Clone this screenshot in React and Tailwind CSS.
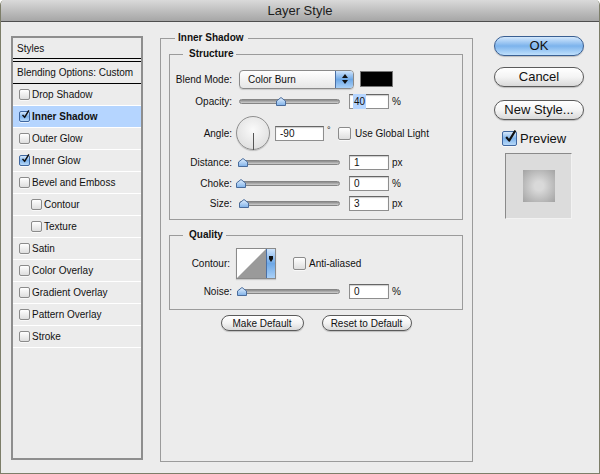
const styles = [
  { name: 'Drop Shadow' },
  { name: 'Inner Shadow', checked: true, selected: true },
  { name: 'Outer Glow' },
  { name: 'Inner Glow', checked: true },
  { name: 'Bevel and Emboss' },
  { name: 'Contour', indent: true },
  { name: 'Texture', indent: true },
  { name: 'Satin' },
  { name: 'Color Overlay' },
  { name: 'Gradient Overlay' },
  { name: 'Pattern Overlay' },
  { name: 'Stroke' },
]

const CheckMark = () => (
  <svg viewBox="0 0 12 12" className="absolute -top-[2px] left-[1px] w-full h-full overflow-visible">
    <path d="M2 6.5 L4.8 9.8 L10.5 0.5" fill="none" stroke="#111" strokeWidth="2" strokeLinejoin="round" />
  </svg>
)

const Check = ({ checked, className }) => (
  <span
    className={
      'relative shrink-0 inline-block rounded-[2px] border shadow-[0_1px_0_rgba(255,255,255,0.7)] ' +
      (checked
        ? 'border-[#3f67a0] bg-gradient-to-b from-[#d6e8fb] via-[#7fb4ec] to-[#b7d8f8] '
        : 'border-[#8b8b8b] bg-gradient-to-b from-white to-[#dedede] ') +
      className
    }
  >
    {checked && <CheckMark />}
  </span>
)

const Thumb = () => (
  <svg width="10" height="9" viewBox="0 0 10 9">
    <defs>
      <linearGradient id="tg" x1="0" y1="0" x2="0" y2="1">
        <stop offset="0" stopColor="#e4f1ff" />
        <stop offset="1" stopColor="#7fb1e8" />
      </linearGradient>
    </defs>
    <path d="M0.5 8.5 V4 L5 0.5 L9.5 4 V8.5 Z" fill="url(#tg)" stroke="#4a6c9c" strokeWidth="1" />
  </svg>
)

const Slider = ({ pos }) => (
  <span className="relative shrink-0 w-[101px] h-[5px] rounded-full border border-[#858585] bg-gradient-to-b from-[#8a8a8a] to-[#cfcfcf]">
    <span className="absolute -top-[3px] leading-none" style={{ left: pos }}>
      <Thumb />
    </span>
  </span>
)

const Field = ({ value, className, selected }) => (
  <span
    className={
      'shrink-0 flex items-center h-[15px] bg-white border border-[#8e8e8e] border-t-[#666] shadow-[inset_0_1px_1px_rgba(0,0,0,0.2)] pl-[4px] text-[10px] ' +
      className
    }
  >
    {selected ? <span className="bg-[#b5d5ff] px-[1px] -ml-[1px]">{value}</span> : value}
  </span>
)

const Label = ({ children, className = '' }) => (
  <span className={'w-[62px] shrink-0 text-right text-[10px] ' + className}>{children}</span>
)

const SliderRow = ({ label, pos, value, unit, className, selected }) => (
  <div className={'flex items-center h-[16px] ' + className}>
    <Label>{label}</Label>
    <span className="ml-[7px] flex items-center">
      <Slider pos={pos} />
    </span>
    <Field value={value} selected={selected} className="ml-[9px] w-[40px]" />
    <span className="ml-[3px] text-[10px]">{unit}</span>
  </div>
)

const Group = ({ title, className, children }) => (
  <div className={'relative border border-[#9b9b9b] ' + className}>
    <span className="absolute -top-[7px] left-[13px] pl-[6px] pr-[3px] bg-[#ececec] text-[10px] font-bold leading-[12px]">
      {title}
    </span>
    {children}
  </div>
)

const PillButton = ({ children, className, primary }) => (
  <button
    type="button"
    className={
      'flex items-center justify-center rounded-full border shadow-[0_1px_1px_rgba(0,0,0,0.2)] ' +
      (primary
        ? 'border-[#3a5f92] bg-gradient-to-b from-[#d4e8fc] via-[#7cb3ec] to-[#bfe0fc] '
        : 'border-[#5b5b5b] bg-gradient-to-b from-white via-[#f4f4f4] to-[#d9d9d9] ') +
      className
    }
  >
    {children}
  </button>
)

export default function App() {
  return (
    <div className="w-[600px] h-[474px] flex flex-col bg-[#ececec] border-x border-b border-[#7d7e69] rounded-t-[5px] overflow-hidden text-[#111] font-['Liberation_Sans',Arial,sans-serif]">
      {/* title bar */}
      <div className="h-[22px] shrink-0 flex items-center justify-center border-b border-[#4f4f4f] bg-gradient-to-b from-[#dadada] to-[#a6a6a6] text-[13px] text-[#1c1c1c]">
        Layer Style
      </div>

      <div className="flex pl-[10px]">
        {/* styles list */}
        <div className="mt-[14px] w-[132px] h-[424px] border-2 border-[#8e8e8e] text-[10px]">
          <div className="h-[21px] flex items-center pl-[4px] border-b border-black">Styles</div>
          <div className="mt-[2px] h-[23px] flex items-center pl-[4px] border-y border-black">
            Blending Options: Custom
          </div>
          {styles.map((s) => (
            <div
              key={s.name}
              className={
                'h-[22px] flex items-center border-b border-white ' +
                (s.indent ? 'pl-[18px] ' : 'pl-[6px] ') +
                (s.selected ? 'bg-[#b5d5ff]' : '')
              }
            >
              <Check checked={s.checked} className="w-[11px] h-[11px]" />
              <span className={'ml-[2px] ' + (s.selected ? 'font-bold' : '')}>{s.name}</span>
            </div>
          ))}
        </div>

        {/* settings */}
        <div className="relative mt-[16px] ml-[17px] w-[313px] h-[424px] border border-[#9b9b9b] px-[8px] pt-[15px]">
          <span className="absolute -top-[7px] left-[14px] pl-[3px] pr-[4px] bg-[#ececec] text-[10px] font-bold leading-[12px]">
            Inner Shadow
          </span>

          <Group title="Structure" className="w-[294px] h-[166px]">
            <div className="flex items-center h-[20px] mt-[14px]">
              <Label>Blend Mode:</Label>
              <span className="ml-[7px] w-[115px] h-[19px] flex rounded-[4px] border border-[#8a8a8a] bg-gradient-to-b from-white to-[#e6e6e6] shadow-[0_1px_1px_rgba(0,0,0,0.15)] overflow-hidden">
                <span className="flex-1 flex items-center pl-[8px] text-[10px]">Color Burn</span>
                <span className="w-[18px] flex flex-col items-center justify-center gap-[2px] border-l border-[#4a70a6] bg-gradient-to-b from-[#cfe4fb] via-[#6ea8e6] to-[#a9d0f7]">
                  <svg width="6" height="4" viewBox="0 0 6 4"><path d="M0 4 L3 0 L6 4 Z" fill="#111" /></svg>
                  <svg width="6" height="4" viewBox="0 0 6 4"><path d="M0 0 L3 4 L6 0 Z" fill="#111" /></svg>
                </span>
              </span>
              <span className="ml-[6px] w-[33px] h-[16px] bg-black border border-[#777]" />
            </div>

            <SliderRow label="Opacity:" pos={36} value="40" unit="%" selected className="mt-[4px]" />

            <div className="flex items-center h-[34px] mt-[7px]">
              <Label>Angle:</Label>
              <span className="relative ml-[4px] w-[34px] h-[34px] shrink-0 rounded-full border border-[#8f8f8f] bg-[radial-gradient(circle_at_50%_40%,#fafafa,#d8d8d8)] shadow-[0_1px_1px_rgba(0,0,0,0.2)]">
                <span className="absolute left-[16px] top-[16px] w-[1px] h-[17px] bg-[#555]" />
              </span>
              <Field value="-90" className="ml-[5px] w-[49px]" />
              <span className="w-[14px] pl-[3px] self-start mt-[8px] text-[9px]">°</span>
              <Check className="w-[13px] h-[13px]" />
              <span className="ml-[4px] text-[10px]">Use Global Light</span>
            </div>

            <SliderRow label="Distance:" pos={-2} value="1" unit="px" className="mt-[4px]" />
            <SliderRow label="Choke:" pos={-4} value="0" unit="%" className="mt-[5px]" />
            <SliderRow label="Size:" pos={-1} value="3" unit="px" className="mt-[4px]" />
          </Group>

          <Group title="Quality" className="mt-[15px] w-[294px] h-[75px]">
            <div className="flex items-center h-[31px] mt-[12px]">
              <Label className="pr-[2px]">Contour:</Label>
              <span className="ml-[4px] w-[40px] h-[31px] flex border border-[#8a8a8a] bg-white shadow-[0_1px_1px_rgba(0,0,0,0.15)]">
                <svg width="29" height="29" viewBox="0 0 29 29" className="shrink-0">
                  <path d="M0 29 L29 0 L29 29 Z" fill="#9a9a9a" />
                </svg>
                <span className="flex-1 flex items-start justify-center pt-[7px] border-l border-[#4a70a6] bg-gradient-to-b from-[#cfe4fb] via-[#6ea8e6] to-[#a9d0f7]">
                  <svg width="4" height="6" viewBox="0 0 4 6"><path d="M0 0 H4 V3 L2 6 L0 3 Z" fill="#111" /></svg>
                </span>
              </span>
              <Check className="ml-[17px] w-[13px] h-[13px]" />
              <span className="ml-[3px] text-[10px]">Anti-aliased</span>
            </div>
            <SliderRow label="Noise:" pos={-3} value="0" unit="%" className="mt-[4px]" />
          </Group>

          <div className="mt-[5px] w-[294px] flex justify-center gap-[18px] text-[10px]">
            <PillButton className="w-[83px] h-[16px]">Make Default</PillButton>
            <PillButton className="w-[90px] h-[16px]">Reset to Default</PillButton>
          </div>
        </div>

        {/* actions */}
        <div className="mt-[14px] ml-[21px] w-[90px] flex flex-col text-[13px]">
          <PillButton primary className="h-[20px]">OK</PillButton>
          <PillButton className="mt-[11px] h-[20px]">Cancel</PillButton>
          <PillButton className="mt-[13px] h-[20px]">New Style...</PillButton>
          <div className="mt-[11px] h-[15px] flex items-center pl-[8px]">
            <Check checked className="w-[15px] h-[15px]" />
            <span className="ml-[3px]">Preview</span>
          </div>
          <div className="mt-[7px] ml-[11px] w-[67px] h-[66px] flex items-center justify-center bg-[#dcdcdc] border border-[#f2f2f2] border-t-[#8a8a8a] border-l-[#8a8a8a]">
            <span className="w-[32px] h-[32px] bg-[radial-gradient(circle,#d9d9d9_20%,#a3a3a3_100%)]" />
          </div>
        </div>
      </div>
    </div>
  )
}
